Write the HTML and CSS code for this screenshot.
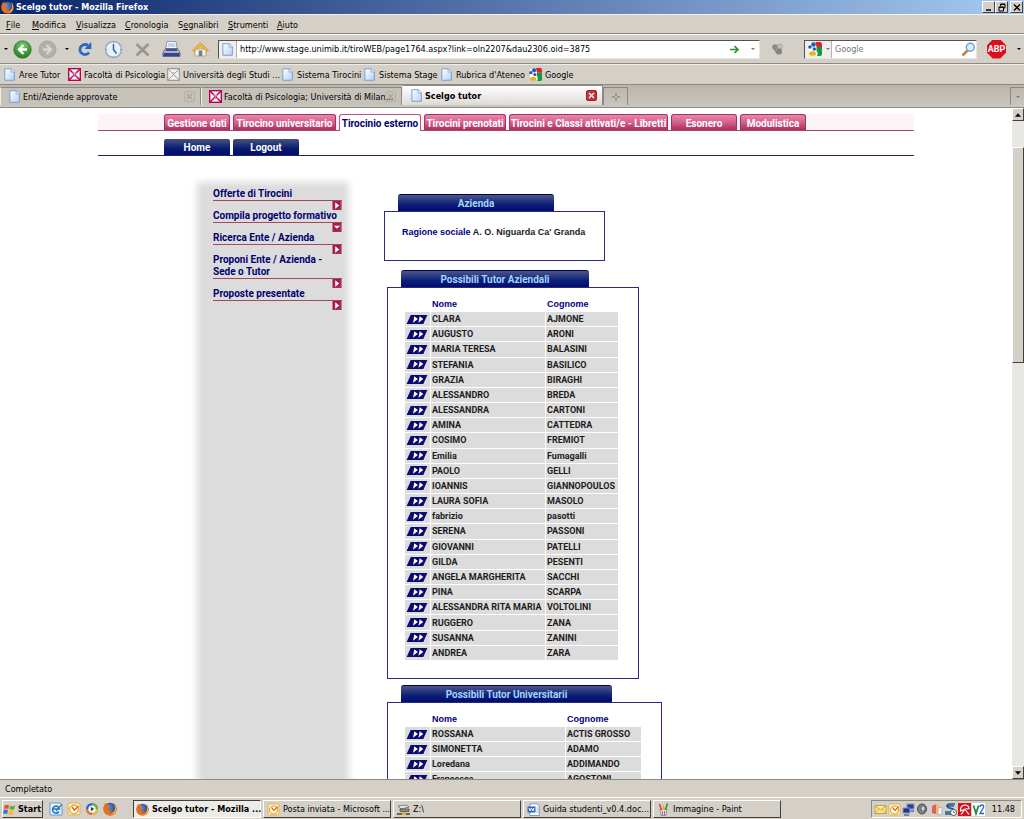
FILE: index.html
```html
<!DOCTYPE html>
<html lang="it">
<head>
<meta charset="utf-8">
<title>Scelgo tutor - Mozilla Firefox</title>
<link rel="stylesheet" href="styles.css">
</head>
<body>
<svg class="defs" aria-hidden="true">
  <defs>
    <linearGradient id="gPage" x1="0" y1="0" x2="1" y2="1"><stop offset="0" stop-color="#fff"/><stop offset="1" stop-color="#b4d2f6"/></linearGradient>
    <radialGradient id="gGreen" cx=".5" cy=".3" r=".7"><stop offset="0" stop-color="#7fce70"/><stop offset="1" stop-color="#1f7a22"/></radialGradient>
    <radialGradient id="gFox" cx=".4" cy=".4" r=".7"><stop offset="0" stop-color="#5c8fe0"/><stop offset="1" stop-color="#16357f"/></radialGradient>
  </defs>
  <symbol id="page" viewBox="0 0 12 14"><path d="M1 .8h7l3.2 3.4v9H1z" fill="url(#gPage)" stroke="#6f9bd4"/><path d="M7.8 1v3.4h3.2" fill="#fff" stroke="#6f9bd4" stroke-width=".8"/></symbol>
  <symbol id="bic" viewBox="0 0 13 13"><rect x=".7" y=".7" width="11.6" height="11.6" fill="#fff" stroke="#b8004f" stroke-width="1.4"/><path d="M1 1l11 11M12 1L1 12" stroke="#b8004f" stroke-width="1.5"/><path d="M4 4.5h5L6.5 7zM4 9l2.500-2L9 9z" fill="#e88ab4"/></symbol>
  <symbol id="bicgrey" viewBox="0 0 13 13"><rect x=".7" y=".7" width="11.6" height="11.6" fill="#f2f0ec" stroke="#8e8c88"/><path d="M1 1l11 11M12 1L1 12" stroke="#9a9894"/><path d="M4 4.500h5L6.500 7z" fill="#b5b3af"/></symbol>
  <symbol id="google" viewBox="0 0 14 14"><rect x="1" y="1" width="12" height="12" fill="#fff"/><path d="M7.500 0H12q2 0 2 2v3H8.500z" fill="#e0202c"/><path d="M8.500 5H14v7q0 2-2 2H9q1.500-3-.5-5z" fill="#129a3c"/><circle cx="5.500" cy="2.500" r="2.300" fill="#2a57b8"/><circle cx="2" cy="5" r="1.800" fill="#2a57b8"/><circle cx="6.300" cy="7" r="1.700" fill="#2a57b8"/><ellipse cx="4.500" cy="11.500" rx="3.500" ry="2.200" fill="#eab51c"/></symbol>
  <symbol id="fox" viewBox="0 0 14 14"><circle cx="7" cy="7" r="6.300" fill="url(#gFox)"/><path d="M1 3.500Q2 2 2.300.8 3.500 2.500 5.500 2.700 7 3 6.800 4.300L5 5.500Q4.500 7 6 8q2 1 3.800-.3Q8.500 10 6 9.800 9 11.500 11 9q1.500-2 .8-5Q11.500 2.500 10.500 1.200 13 2.500 13.600 6q.3 5-4 7.200Q4 14.500 1.200 10.500-.5 7.500 1 3.500z" fill="#e8701a"/><path d="M11.500 2q1.800 2.500 1.400 6-1 4-4.900 4.800 3.500-2.500 4-5 .5-3-.5-5.800z" fill="#f9c23a"/></symbol>
  <symbol id="outlook" viewBox="0 0 14 14"><rect x="1" y="1" width="12" height="12" rx="2" fill="#fdf0c0" stroke="#e8b040"/><circle cx="7" cy="7.500" r="4.300" fill="#fffbe8" stroke="#d9a03c" stroke-width="1.200"/><path d="M5 5l2.500 3L11.500 4" fill="none" stroke="#d05a10" stroke-width="1.200"/></symbol>
  <symbol id="go" viewBox="0 0 23 10"><path d="M4.500 0H23L18.500 10H0z" fill="#0a0a72"/><path d="M8.500 1.500L12.500 4.500 7 8.500l.8-3.200zM14.500 1.500L18.500 4.500 13 8.500l.8-3.200z" fill="#fff"/></symbol>
  <symbol id="right" viewBox="0 0 10 10"><path d="M0 0h10v10H0z" fill="#a81b42"/><path d="M1 9h8V1" fill="none" stroke="#b8385c"/><path d="M3 1.500L7.500 5 3 8.500z" fill="#fff"/></symbol>
  <symbol id="down" viewBox="0 0 10 10"><path d="M0 0h10v10H0z" fill="#a81b42"/><path d="M1 9h8V1" fill="none" stroke="#b8385c"/><path d="M1.500 3h7L5 6.500z" fill="#fff"/></symbol>
</svg>

<header class="titlebar">
  <svg class="i13"><use href="#fox"/></svg>
  <h1 class="window-title">Scelgo tutor - Mozilla Firefox</h1>
  <div class="window-buttons">
    <button aria-label="Riduci a icona"><svg viewBox="0 0 10 9"><path d="M2 7h5" stroke="#000" stroke-width="1.500"/></svg></button>
    <button aria-label="Ripristina"><svg viewBox="0 0 10 9"><path d="M3.500 3V1h4.500v4H6.500M2 4h4.500v4H2zM2 4.300h4.500M3.500 1.500H8" fill="none" stroke="#000"/></svg></button>
    <button class="close" aria-label="Chiudi"><svg viewBox="0 0 10 9"><path d="M2 1.500l6 6M8 1.500l-6 6" stroke="#000" stroke-width="1.400"/></svg></button>
  </div>
</header>

<nav class="menubar" aria-label="Menu">
  <button><u>F</u>ile</button><button><u>M</u>odifica</button><button><u>V</u>isualizza</button><button><u>C</u>ronologia</button><button>S<u>e</u>gnalibri</button><button><u>S</u>trumenti</button><button><u>A</u>iuto</button>
</nav>

<div class="toolbar">
  <span class="arrow"></span>
  <button aria-label="Indietro"><svg class="i19" viewBox="0 0 19 19"><circle cx="9.500" cy="9.500" r="8.700" fill="url(#gGreen)" stroke="#2a7d2b" stroke-width=".8"/><path d="M10.500 5L6 9.500l4.500 4.500M6.500 9.500H14" fill="none" stroke="#fff" stroke-width="2.300"/></svg></button>
  <button aria-label="Avanti"><svg class="i19" viewBox="0 0 19 19"><circle cx="9.500" cy="9.500" r="8.500" fill="#b2b0ac" stroke="#a09e9a" stroke-width=".8"/><path d="M8.500 5L13 9.500 8.500 14M12.500 9.500H5" fill="none" stroke="#d8d6d2" stroke-width="2.300"/></svg></button>
  <span class="arrow"></span>
  <button aria-label="Ricarica"><svg class="i19" viewBox="0 0 19 19"><path d="M14 12.500A5 5 0 1 1 13 5.500" fill="none" stroke="#2467c8" stroke-width="2.800"/><path d="M16.300 2v7H9.500z" fill="#2467c8"/></svg></button>
  <button aria-label="Cronologia"><svg class="i19" viewBox="0 0 19 19"><circle cx="9.500" cy="9.500" r="8" fill="#e8f1fb" stroke="#8fa9c8" stroke-width="1.500"/><path d="M9.500 4v5.500l3 4" fill="none" stroke="#3c5f94" stroke-width="1.500"/><path d="M9.500 2.200v1M9.500 16v1M2.200 9.500h1M16 9.500h1" stroke="#7d9ac0"/></svg></button>
  <button aria-label="Interrompi"><svg class="i19" viewBox="0 0 19 19"><path d="M3.500 4l12 11.500M15.500 4l-12 11.500" stroke="#9b9894" stroke-width="3"/></svg></button>
  <button aria-label="Stampa"><svg class="i19" viewBox="0 0 19 19"><path d="M5 1.500h9l1.500 9h-12z" fill="#f8faff" stroke="#7384b5" stroke-width=".8"/><path d="M6 4h7M5.700 6h8" stroke="#8eb0ea"/><path d="M3.500 8.500h12l2.500 4v4H1v-4z" fill="#a7b2d2" stroke="#4b5685" stroke-width=".8"/><path d="M1.500 13h16v3h-16z" fill="#384483"/><path d="M4 10h11" stroke="#2b315e" stroke-width="1.500"/></svg></button>
  <button aria-label="Pagina iniziale"><svg class="i19" viewBox="0 0 19 19"><path d="M4 9h11v7H4z" fill="#f5f2e6" stroke="#a39a74" stroke-width=".8"/><path d="M1.500 10.500L9.500 2.500l8 8-1.500 1-6.500-5.500L3 11.500z" fill="#f4bd35" stroke="#c68b18" stroke-width=".7"/><path d="M7.700 10.500h3.600V16H7.700z" fill="#6e7da0"/></svg></button>
  <div class="urlbar">
    <span class="site"><svg class="i13"><use href="#page"/></svg></span>
    <input class="url" aria-label="Indirizzo" value="http://www.stage.unimib.it/tiroWEB/page1764.aspx?link=oln2207&amp;dau2306.oid=3875">
    <button aria-label="Vai"><svg class="i11" viewBox="0 0 11 11"><path d="M1 5.500h7M5.500 2l3.500 3.500L5.500 9" fill="none" stroke="#2d9230" stroke-width="1.700"/></svg></button>
    <span class="arrow grey"></span>
  </div>
  <svg class="feed i13" viewBox="0 0 13 13"><circle cx="4" cy="4" r="2.800" fill="#8c8a87"/><circle cx="9" cy="3.500" r="2.500" fill="#c4c1bb" stroke="#94928e" stroke-width=".6"/><circle cx="8" cy="8.500" r="3" fill="#858380"/><path d="M3 5l3 5" stroke="#858380" stroke-width="1.500"/></svg>
  <div class="search">
    <span class="engine"><svg class="i14"><use href="#google"/></svg><span class="arrow grey"></span></span>
    <input aria-label="Cerca" placeholder="Google">
    <svg class="i15" viewBox="0 0 15 15"><path d="M1.500 13.500L7 8" stroke="#b9824a" stroke-width="2.500"/><circle cx="9.300" cy="5.300" r="4" fill="#d9effc" stroke="#6ba0cf" stroke-width="1.400"/></svg>
  </div>
  <button class="abp" aria-label="Adblock Plus">ABP</button>
  <span class="arrow"></span>
</div>

<nav class="bookmarks" aria-label="Segnalibri">
  <a href="#"><svg class="i13"><use href="#page"/></svg>Aree Tutor</a>
  <a href="#"><svg class="i13"><use href="#bic"/></svg>Facoltà di Psicologia</a>
  <a href="#"><svg class="i13"><use href="#bicgrey"/></svg>Università degli Studi ...</a>
  <a href="#"><svg class="i13"><use href="#page"/></svg>Sistema Tirocini</a>
  <a href="#"><svg class="i13"><use href="#page"/></svg>Sistema Stage</a>
  <a href="#"><svg class="i13"><use href="#page"/></svg>Rubrica d'Ateneo</a>
  <a href="#"><svg class="i13"><use href="#google"/></svg>Google</a>
</nav>

<div class="tabstrip">
  <div class="tab"><svg class="i13"><use href="#page"/></svg><span>Enti/Aziende approvate</span><button class="x" aria-label="Chiudi scheda"><svg viewBox="0 0 7 7"><path d="M1 1l5 5M6 1L1 6" stroke="currentColor" stroke-width="1.300"/></svg></button></div>
  <div class="tab"><svg class="i13"><use href="#bic"/></svg><span>Facoltà di Psicologia; Università di Milan...</span><button class="x" aria-label="Chiudi scheda"><svg viewBox="0 0 7 7"><path d="M1 1l5 5M6 1L1 6" stroke="currentColor" stroke-width="1.300"/></svg></button></div>
  <div class="tab active"><svg class="i13"><use href="#page"/></svg><span>Scelgo tutor</span><button class="x" aria-label="Chiudi scheda"><svg viewBox="0 0 7 7"><path d="M1 1l5 5M6 1L1 6" stroke="currentColor" stroke-width="1.300"/></svg></button></div>
  <button class="newtab" aria-label="Nuova scheda"><svg viewBox="0 0 8 8"><path d="M4 0v3M4 5v3M0 4h3M5 4h3" stroke="#77746e"/></svg></button>
  <button class="alltabs" aria-label="Elenca schede"><span class="arrow grey"></span></button>
</div>

<div class="viewport">
  <div class="page">
    <div class="site-wrap">
      <nav class="nav-main" aria-label="Sezioni">
        <a class="w66" href="#">Gestione dati</a><a class="w103" href="#">Tirocino universitario</a><a class="w82 current" href="#">Tirocinio esterno</a><a class="w82" href="#">Tirocini prenotati</a><a class="w159" href="#">Tirocini e Classi attivati/e - Libretti</a><a class="w66" href="#">Esonero</a><a class="w66" href="#">Modulistica</a>
      </nav>
      <nav class="nav-sub" aria-label="Sessione">
        <a class="w66" href="#">Home</a><a class="w66" href="#">Logout</a>
      </nav>
      <div class="columns">
        <aside class="side">
          <a href="#">Offerte di Tirocini<svg><use href="#right"/></svg></a>
          <a href="#">Compila progetto formativo<svg><use href="#down"/></svg></a>
          <a href="#">Ricerca Ente / Azienda<svg><use href="#right"/></svg></a>
          <a href="#">Proponi Ente / Azienda -<br>Sede o Tutor<svg><use href="#right"/></svg></a>
          <a href="#">Proposte presentate<svg><use href="#right"/></svg></a>
        </aside>
        <main>
          <section class="card company">
            <h2>Azienda</h2>
            <div class="box"><p><b>Ragione sociale</b> A. O. Niguarda Ca' Granda</p></div>
          </section>
          <section class="card aziendali">
            <h2>Possibili Tutor Aziendali</h2>
            <div class="box">
              <table>
                <thead><tr><th></th><th>Nome</th><th>Cognome</th></tr></thead>
                <tbody>
                <tr><td><a href="#" aria-label="Scegli"><svg><use href="#go"/></svg></a></td><td>CLARA</td><td>AJMONE</td></tr>
                <tr><td><a href="#" aria-label="Scegli"><svg><use href="#go"/></svg></a></td><td>AUGUSTO</td><td>ARONI</td></tr>
                <tr><td><a href="#" aria-label="Scegli"><svg><use href="#go"/></svg></a></td><td>MARIA TERESA</td><td>BALASINI</td></tr>
                <tr><td><a href="#" aria-label="Scegli"><svg><use href="#go"/></svg></a></td><td>STEFANIA</td><td>BASILICO</td></tr>
                <tr><td><a href="#" aria-label="Scegli"><svg><use href="#go"/></svg></a></td><td>GRAZIA</td><td>BIRAGHI</td></tr>
                <tr><td><a href="#" aria-label="Scegli"><svg><use href="#go"/></svg></a></td><td>ALESSANDRO</td><td>BREDA</td></tr>
                <tr><td><a href="#" aria-label="Scegli"><svg><use href="#go"/></svg></a></td><td>ALESSANDRA</td><td>CARTONI</td></tr>
                <tr><td><a href="#" aria-label="Scegli"><svg><use href="#go"/></svg></a></td><td>AMINA</td><td>CATTEDRA</td></tr>
                <tr><td><a href="#" aria-label="Scegli"><svg><use href="#go"/></svg></a></td><td>COSIMO</td><td>FREMIOT</td></tr>
                <tr><td><a href="#" aria-label="Scegli"><svg><use href="#go"/></svg></a></td><td>Emilia</td><td>Fumagalli</td></tr>
                <tr><td><a href="#" aria-label="Scegli"><svg><use href="#go"/></svg></a></td><td>PAOLO</td><td>GELLI</td></tr>
                <tr><td><a href="#" aria-label="Scegli"><svg><use href="#go"/></svg></a></td><td>IOANNIS</td><td>GIANNOPOULOS</td></tr>
                <tr><td><a href="#" aria-label="Scegli"><svg><use href="#go"/></svg></a></td><td>LAURA SOFIA</td><td>MASOLO</td></tr>
                <tr><td><a href="#" aria-label="Scegli"><svg><use href="#go"/></svg></a></td><td>fabrizio</td><td>pasotti</td></tr>
                <tr><td><a href="#" aria-label="Scegli"><svg><use href="#go"/></svg></a></td><td>SERENA</td><td>PASSONI</td></tr>
                <tr><td><a href="#" aria-label="Scegli"><svg><use href="#go"/></svg></a></td><td>GIOVANNI</td><td>PATELLI</td></tr>
                <tr><td><a href="#" aria-label="Scegli"><svg><use href="#go"/></svg></a></td><td>GILDA</td><td>PESENTI</td></tr>
                <tr><td><a href="#" aria-label="Scegli"><svg><use href="#go"/></svg></a></td><td>ANGELA MARGHERITA</td><td>SACCHI</td></tr>
                <tr><td><a href="#" aria-label="Scegli"><svg><use href="#go"/></svg></a></td><td>PINA</td><td>SCARPA</td></tr>
                <tr><td><a href="#" aria-label="Scegli"><svg><use href="#go"/></svg></a></td><td>ALESSANDRA RITA MARIA</td><td>VOLTOLINI</td></tr>
                <tr><td><a href="#" aria-label="Scegli"><svg><use href="#go"/></svg></a></td><td>RUGGERO</td><td>ZANA</td></tr>
                <tr><td><a href="#" aria-label="Scegli"><svg><use href="#go"/></svg></a></td><td>SUSANNA</td><td>ZANINI</td></tr>
                <tr><td><a href="#" aria-label="Scegli"><svg><use href="#go"/></svg></a></td><td>ANDREA</td><td>ZARA</td></tr>
                </tbody>
              </table>
            </div>
          </section>
          <section class="card universitari">
            <h2>Possibili Tutor Universitarii</h2>
            <div class="box">
              <table>
                <thead><tr><th></th><th>Nome</th><th>Cognome</th></tr></thead>
                <tbody>
                <tr><td><a href="#" aria-label="Scegli"><svg><use href="#go"/></svg></a></td><td>ROSSANA</td><td>ACTIS GROSSO</td></tr>
                <tr><td><a href="#" aria-label="Scegli"><svg><use href="#go"/></svg></a></td><td>SIMONETTA</td><td>ADAMO</td></tr>
                <tr><td><a href="#" aria-label="Scegli"><svg><use href="#go"/></svg></a></td><td>Loredana</td><td>ADDIMANDO</td></tr>
                <tr><td><a href="#" aria-label="Scegli"><svg><use href="#go"/></svg></a></td><td>Francesca</td><td>AGOSTONI</td></tr>
                </tbody>
              </table>
            </div>
          </section>
        </main>
      </div>
    </div>
  </div>
  <div class="scrollbar" aria-hidden="true">
    <span class="sb-btn"><svg viewBox="0 0 7 4"><path d="M0 4l3.500-4L7 4z"/></svg></span>
    <span class="sb-gap"></span><span class="sb-thumb"></span><span class="sb-rest"></span>
    <span class="sb-btn"><svg viewBox="0 0 7 4"><path d="M0 0l3.500 4L7 0z"/></svg></span>
  </div>
</div>

<div class="status">Completato</div>

<footer class="taskbar">
  <button class="start"><svg class="i13" viewBox="0 0 13 13"><path d="M1.500 2.500Q4 1 6 2.300L5.300 6Q3.500 5 1 6z" fill="#e8502a"/><path d="M7 2.700q2 1.200 5-.2L11 6.200q-2.500 1-4.500.1z" fill="#5fae36"/><path d="M.8 7Q3 6 5 7l-.8 4Q2 10 0 11z" fill="#3a73d8"/><path d="M6.200 7.300q2.500 1 4.600 0L10 11.200q-2.500 1-4.500.2z" fill="#f3bb2c"/></svg>Start</button>
  <div class="quick">
    <button aria-label="Internet Explorer"><svg class="i14" viewBox="0 0 14 14"><path d="M1 1h10l2 2v10H1z" fill="#eaf4fc" stroke="#5da0cc"/><path d="M10 9.500A3.500 3.500 0 1 1 10.500 7H4" fill="none" stroke="#2478c4" stroke-width="1.600"/><path d="M7 9l6-7" stroke="#3a7e9e" stroke-width="1.300"/></svg></button>
    <button aria-label="Outlook"><svg class="i14"><use href="#outlook"/></svg></button>
    <button aria-label="Media Player"><svg class="i14" viewBox="0 0 14 14"><circle cx="7" cy="7" r="6" fill="#2b68bd"/><path d="M7 1a6 6 0 0 1 6 6H7z" fill="#68b13c"/><path d="M1 7a6 6 0 0 0 6 6V7z" fill="#e8792c"/><path d="M7 13a6 6 0 0 0 6-6H7z" fill="#f2bd31"/><circle cx="7" cy="7" r="3.600" fill="#fff"/><path d="M5.800 4.800L9.300 7 5.800 9.200z" fill="#1d3f86"/></svg></button>
    <button aria-label="Firefox"><svg class="i14"><use href="#fox"/></svg></button>
  </div>
  <div class="tasks">
    <button class="pressed"><svg class="i13"><use href="#fox"/></svg>Scelgo tutor - Mozilla ...</button>
    <button><svg class="i13"><use href="#outlook"/></svg>Posta inviata - Microsoft ...</button>
    <button><svg class="i13" viewBox="0 0 13 13"><path d="M1 3l8-1 3 2-8 2z" fill="#e8e6df" stroke="#555" stroke-width=".7"/><path d="M3 6h9v2.500H3z" fill="#8f8d88" stroke="#444" stroke-width=".7"/><path d="M0 11h13" stroke="#40403e" stroke-width="1.500"/><path d="M5 9h4v3H5z" fill="#d6b830"/></svg>Z:\</button>
    <button><svg class="i13" viewBox="0 0 13 13"><path d="M3 .8h7l2.300 2.200v9.500H3z" fill="#fff" stroke="#5b84c4" stroke-width=".8"/><path d="M.5 3.500h8v6h-8z" fill="#2f62b8"/><path d="M2 5l1 3 1.500-3L6 8l1-3" fill="none" stroke="#fff"/><path d="M9.500 5h2M9.500 7h2M9.500 9h2" stroke="#7da0d6" stroke-width=".8"/></svg>Guida studenti_v0.4.doc...</button>
    <button><svg class="i13" viewBox="0 0 13 13"><path d="M3 6h7l-1 6.500H4z" fill="#d8e4e8" stroke="#68808a" stroke-width=".7"/><path d="M4.500 7L2.500 1" stroke="#d94b2b" stroke-width="1.600"/><path d="M6.500 7V2" stroke="#e9b52a" stroke-width="1.600"/><path d="M8.500 7l2-6.500" stroke="#3d8b47" stroke-width="1.600"/><path d="M5.500 8v4M7.500 8v4" stroke="#d54a90"/></svg>Immagine - Paint</button>
  </div>
  <div class="tray">
    <svg class="i13" viewBox="0 0 13 13"><path d="M1 2.500h11v8H1z" fill="#fbe88e" stroke="#b8932a" stroke-width=".8"/><path d="M1 3l5.500 4L12 3M1 10.500L5 6.500M12 10.500L8 6.500" fill="none" stroke="#b8932a" stroke-width=".8"/></svg>
    <svg class="i13"><use href="#outlook"/></svg>
    <svg class="i13" viewBox="0 0 13 13"><path d="M5 1h7v5H5z" fill="#2440a8" stroke="#8b93b5"/><path d="M1 5h7v5H1z" fill="#1c3796" stroke="#8b93b5"/><path d="M2 12h5M9 8h3" stroke="#5d6790" stroke-width="1.300"/></svg>
    <svg class="i13" viewBox="0 0 13 13"><ellipse cx="6" cy="6" rx="4.500" ry="5" fill="#7d8086" stroke="#4a4d54"/><ellipse cx="7" cy="5.500" rx="2" ry="2.700" fill="#d8dade" stroke="#50535a" stroke-width=".8"/></svg>
    <svg class="i13" viewBox="0 0 13 13"><path d="M2 3l4-2v10l-4-1z" fill="#e35b6a"/><path d="M6 1l3 1v10l-3-1z" fill="#f0c04a"/><path d="M8 5l4-1v7l-4 1z" fill="#f5f5fa" stroke="#9aa0c2" stroke-width=".7"/></svg>
    <svg class="i13" viewBox="0 0 13 13"><path d="M11 1H5Q2 2 4 4.500l5 1.500q1 3-2 3H1M2 3h8M1 11h6" fill="none" stroke="#1d5a94" stroke-width="1.700"/><circle cx="9.500" cy="9.500" r="3" fill="#fff" stroke="#333" stroke-width=".8"/><path d="M9.500 8v1.500H11" fill="none" stroke="#333" stroke-width=".7"/></svg>
    <svg class="i13" viewBox="0 0 13 13"><path d="M0 0h13v13H0z" fill="#d5121e"/><path d="M2.500 8Q2 3 6.500 2 11 2 11 5.500L7.500 6zM7 6L3 11.500M7.500 7l3.500 4.500" fill="none" stroke="#fff" stroke-width="1.200"/></svg>
    <svg class="i13" viewBox="0 0 13 13"><path d="M0 0h13v13H0z" fill="#fff"/><path d="M1.500 2.500L4 10.500l2.500-8" fill="none" stroke="#1c9038" stroke-width="1.800"/><path d="M8 4q0-2 2-2t1.500 2.500L8 10.500h4" fill="none" stroke="#2a62c8" stroke-width="1.300"/></svg>
    <time>11.48</time>
  </div>
</footer>
</body>
</html>
```
FILE: styles.css
```css
* { box-sizing: border-box; }
body {
  margin: 0;
  height: 100vh;
  display: flex;
  flex-direction: column;
  overflow: hidden;
  background: #d4d0c8;
  color: #000;
  font: 9px/12px "DejaVu Sans Condensed", "Liberation Sans", sans-serif;
}
button, input { font: inherit; color: inherit; margin: 0; padding: 0; border: 0; background: none; }
button { display: flex; align-items: center; white-space: nowrap; }
a { color: inherit; text-decoration: none; }
svg { flex: none; display: block; }
.defs { position: absolute; width: 0; height: 0; }
.i11 { width: 11px; height: 11px; }
.i13 { width: 13px; height: 13px; }
.i14 { width: 14px; height: 14px; }
.i15 { width: 15px; height: 15px; }
.i19 { width: 19px; height: 19px; }
.arrow { flex: none; border: 2px solid transparent; border-top-color: #000; border-bottom: 0; }
.arrow.grey { border-top-color: #777; }

.titlebar {
  flex: none;
  height: 14px;
  display: flex;
  align-items: center;
  gap: 2px;
  padding: 0 1px;
  background: linear-gradient(90deg, #0a246a, #a6caf0);
  color: #fff;
}
.window-title { flex: 1; margin: 0; font-size: 9px; line-height: 12px; font-weight: bold; }
.window-buttons { display: flex; }
.window-buttons button {
  width: 13px;
  height: 12px;
  justify-content: center;
  background: #d4d0c8;
  border: 1px solid;
  border-color: #fff #404040 #404040 #fff;
}
.window-buttons svg { width: 10px; height: 9px; }
.window-buttons .close { margin-left: 2px; }

.menubar {
  flex: none;
  height: 20px;
  display: grid;
  grid-template-columns: 26px 44px 49px 53px 50px 49px 40px;
  align-items: center;
  padding: 1px 6px 0;
  border-top: 1px solid #f4f2ee;
  border-bottom: 1px solid #8c8982;
}

.toolbar {
  flex: none;
  height: 30px;
  display: flex;
  align-items: center;
  padding: 0 3px 0 4px;
  border-top: 1px solid #fff;
  border-bottom: 1px solid #8c8982;
}
.toolbar > button { margin-left: 6px; }
.toolbar > button + .arrow { margin-left: 8px; }
.toolbar > .arrow + button { margin-left: 5px; }
.toolbar > .arrow ~ .arrow + button ~ button { margin-left: 10px; }
.toolbar > .arrow ~ .arrow + button { margin-left: 6px; }
.urlbar, .search {
  height: 19px;
  display: flex;
  align-items: center;
  background: #fff;
  border: 1px solid;
  border-color: #55534e #e8e5df #e8e5df #55534e;
}
.urlbar { flex: 1; margin-left: 8px; padding-right: 4px; gap: 11px; }
.site, .engine { height: 17px; display: flex; align-items: center; background: #efeeea; border-right: 1px solid #b5b2ab; }
.site { width: 18px; justify-content: center; }
.url { flex: 1; min-width: 0; margin-left: -8px; }
.feed { margin-left: 11px; }
.search { width: 173px; margin-left: 20px; }
.engine { width: 27px; gap: 4px; padding-left: 3px; }
.search input { flex: 1; min-width: 0; padding-left: 3px; }
.search input::placeholder { color: #777; opacity: 1; }
.toolbar > .abp.abp {
  width: 19px;
  height: 19px;
  margin: 0 3px 0 9px;
  justify-content: center;
  clip-path: polygon(30% 0, 70% 0, 100% 30%, 100% 70%, 70% 100%, 30% 100%, 0 70%, 0 30%);
  background: #d9101c;
  color: #fff;
  font: bold 9px/12px Roboto, sans-serif;
}

.bookmarks {
  flex: none;
  height: 21px;
  display: grid;
  grid-template-columns: 65px 99px 114px 82px 77px 89px 60px;
  align-items: center;
  padding-left: 3px;
  border-top: 1px solid #eeece8;
  border-bottom: 1px solid #8c8982;
  white-space: nowrap;
}
.bookmarks a { display: flex; align-items: center; gap: 3px; }

.tabstrip {
  flex: none;
  height: 23px;
  display: flex;
  align-items: flex-end;
  padding-bottom: 2px;
  background: linear-gradient(#b9b5ad, #cbc7bf);
  border-bottom: 1px solid #8c8982;
}
.tab {
  flex: 0 1 201px;
  min-width: 0;
  height: 18px;
  display: flex;
  align-items: center;
  gap: 2px;
  padding: 0 5px 0 7px;
  background: #c6c2ba;
  border: 1px solid #8c8982;
  border-left-color: #eeece8;
  border-bottom: 0;
  white-space: nowrap;
}
.tab span { flex: 1; min-width: 0; }
.tab.active { height: 20px; background: linear-gradient(#fff, #dedbd5); font-weight: bold; }
.x { width: 11px; height: 11px; justify-content: center; color: #aaa69e; border: 1px solid #b4b0a8; border-radius: 2px; }
.x svg { width: 7px; height: 7px; }
.active .x { background: #cc3038; border-color: #a02028; color: #fff; }
.newtab { width: 25px; height: 18px; justify-content: center; border: 1px solid #8c8982; border-bottom: 0; }
.newtab svg { width: 8px; height: 8px; }
.alltabs { width: 14px; height: 18px; margin-left: auto; justify-content: center; border: 1px solid #8c8982; border-right: 0; border-bottom: 0; }

.viewport { flex: 1; min-height: 0; display: flex; background: #fff; }
.page { flex: 1; min-width: 0; overflow: hidden; font: bold 9px/12px "Liberation Sans", sans-serif; }
.site-wrap { max-width: 816px; height: 100%; margin: 0 auto; padding-top: 6px; display: flex; flex-direction: column; }
.nav-main, .nav-sub {
  flex: none;
  display: flex;
  gap: 3px;
  padding-left: 66px;
  font-family: Roboto, "Liberation Sans", sans-serif;
  font-size: 10px;
  line-height: 17px;
  text-align: center;
  white-space: nowrap;
  color: #fff;
}
.nav-main { background: #fdf4f7; border-bottom: 1px solid #a04870; }
.nav-main a {
  height: 16px;
  display: flex;
  justify-content: center;
  border: 1px solid #a83060;
  border-bottom: 0;
  border-radius: 3px 3px 0 0;
  background: linear-gradient(#e887ab, #d4608d 50%, #ac2c58);
}
.nav-main .current { height: 17px; margin-bottom: -1px; background: #fff; border-color: #c84880; color: #000070; }
.nav-sub { margin-top: 8px; border-bottom: 1px solid #23235f; }
.nav-sub a { height: 16px; border-radius: 2px 2px 0 0; background: linear-gradient(#47527f, #081c72 60%, #000f70); }
.w66 { width: 66px; }
.w82 { width: 82px; }
.w103 { width: 103px; }
.w159 { width: 159px; }

.columns { flex: 1; min-height: 0; display: flex; padding-left: 105px; }
.side {
  width: 140px;
  flex: none;
  margin-top: 32px;
  padding-left: 10px;
  background: #dcdcdc;
  box-shadow: 0 0 7px 6px #dcdcdc;
  font-family: Roboto, "Liberation Sans", sans-serif;
  font-size: 10px;
  line-height: 12px;
  color: #000070;
}
.side a { display: block; white-space: nowrap; }
.side a svg { width: 129px; height: 10px; padding-left: 119px; border-top: 1px solid #a84858; }
main { margin: 38px 0 0 41px; min-width: 0; }
.card h2 {
  width: 188px;
  height: 17px;
  margin: 0 0 0 14px;
  border-radius: 3px 3px 0 0;
  border-top: 1px solid #000050;
  background: linear-gradient(#4c5688, #0b1f78 60%, #000c70);
  color: #a4d4ff;
  font-family: Roboto, "Liberation Sans", sans-serif;
  font-size: 10px;
  line-height: 18px;
  text-align: center;
}
.box { border: 1px solid #2a2a80; padding: 8px 19px 17px 16px; }
.company { width: 221px; }
.company h2 { width: 156px; }
.company .box { height: 50px; padding: 14px 17px; }
.company p { margin: 0; white-space: nowrap; color: #1c1c1c; }
.company b, th { color: #000080; }
.aziendali { width: 252px; margin: 9px 0 0 3px; }
.universitari { width: 275px; margin: 6px 0 0 3px; }
.universitari h2 { width: 211px; }
table { width: 100%; table-layout: fixed; border-collapse: separate; border-spacing: 1px; color: #1c1c1c; line-height: 14px; white-space: nowrap; }
.aziendali table { height: 365px; }
th, td { padding: 0 1px; text-align: left; }
td { background: #dcdcdc; font-family: Roboto, "Liberation Sans", sans-serif; }
th:first-child { width: 25px; }
th:last-child { width: 72px; }
.universitari th:last-child { width: 75px; }
td svg { width: 22px; height: 9px; }

.scrollbar { width: 12px; flex: none; display: flex; flex-direction: column; background: #e9e7e3; }
.sb-btn, .sb-thumb { background: #d4d0c8; border: 1px solid; border-color: #fff #404040 #404040 #fff; }
.sb-btn { height: 13px; display: flex; align-items: center; justify-content: center; }
.sb-btn svg { width: 6px; height: 4px; }
.sb-gap { flex: 26; }
.sb-thumb { flex: 215; }
.sb-rest { flex: 405; }

.status { flex: none; height: 18px; padding: 3px 5px; border-top: 1px solid #8c8982; }

.taskbar { flex: none; height: 22px; display: flex; align-items: center; padding: 1px 2px 0; border-top: 1px solid #fff; }
.start, .tasks button {
  height: 18px;
  gap: 2px;
  border: 1px solid;
  border-color: #fff #404040 #404040 #fff;
}
.start { width: 41px; font-weight: bold; }
.quick { display: flex; gap: 4px; margin: 0 16px 0 6px; }
.tasks { flex: 1; display: flex; gap: 2px; min-width: 0; }
.tasks button { flex: 0 1 128px; min-width: 0; padding-left: 3px; gap: 3px; }
.tasks .pressed { padding-left: 2px; font-weight: bold; background: #ecebe7; border-color: #404040 #fff #fff #404040; }
.tray { height: 18px; display: flex; align-items: center; gap: 1px; padding: 0 6px 0 2px; border: 1px solid; border-color: #8c8982 #fff #fff #8c8982; }
.tray time { margin-left: 6px; }
```
